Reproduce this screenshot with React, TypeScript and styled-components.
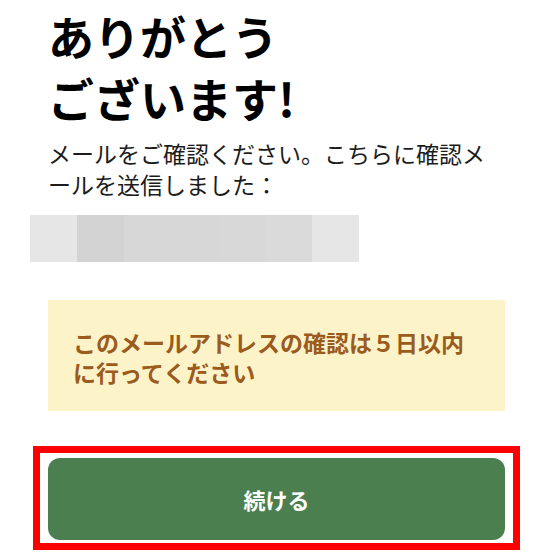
import styled, { createGlobalStyle } from "styled-components";

const GlobalStyle = createGlobalStyle`
  body {
    margin: 0;
    background: #fff;
    font-family: "Noto Sans CJK JP", "Noto Sans", sans-serif;
  }
`;

const shades = ["#e6e6e6", "#d3d3d3", "#d7d7d7", "#d7d7d7", "#d8d8d8", "#dadada", "#e6e6e6"];

export default function App() {
  return (
    <>
      <GlobalStyle />
      <Page>
        <Title>
          ありがとう
          <br />
          ございます!
        </Title>
        <Message>メールをご確認ください。こちらに確認メールを送信しました：</Message>
        <Redacted aria-label="メールアドレス">
          {shades.map((s, i) => (
            <Block key={i} $shade={s} />
          ))}
        </Redacted>
        <Notice>このメールアドレスの確認は５日以内に行ってください</Notice>
        <Highlight>
          <ContinueButton type="button">続ける</ContinueButton>
        </Highlight>
      </Page>
    </>
  );
}

const Page = styled.main`
  display: flex;
  flex-direction: column;
  padding: 4px 48px 0;
`;

const Title = styled.h1`
  margin: 0;
  font-size: 46px;
  line-height: 62px;
  font-weight: 700;
  color: #000;
`;

const Message = styled.p`
  margin: 10px 0 0;
  font-size: 23px;
  line-height: 30.5px;
  color: #1c1c1c;
`;

const Redacted = styled.div`
  display: flex;
  height: 47px;
  margin: 16px 0 0 -18px;
`;

const Block = styled.span<{ $shade: string }>`
  width: 47px;
  background: ${(p) => p.$shade};
`;

const Notice = styled.div`
  margin-top: 38px;
  padding: 27px 25px 24px;
  background: #fcf3c9;
  color: #9b5b1e;
  font-size: 23px;
  line-height: 30px;
  font-weight: 700;
`;

const Highlight = styled.div`
  margin: 35px -15px 0;
  padding: 5px 8px 3px;
  border: 7px solid #ff0000;
`;

const ContinueButton = styled.button`
  display: block;
  width: 100%;
  height: 82px;
  border: none;
  border-radius: 12px;
  background: #4b7f50;
  color: #fff;
  font-family: inherit;
  font-size: 22px;
  font-weight: 700;
  cursor: pointer;
`;
